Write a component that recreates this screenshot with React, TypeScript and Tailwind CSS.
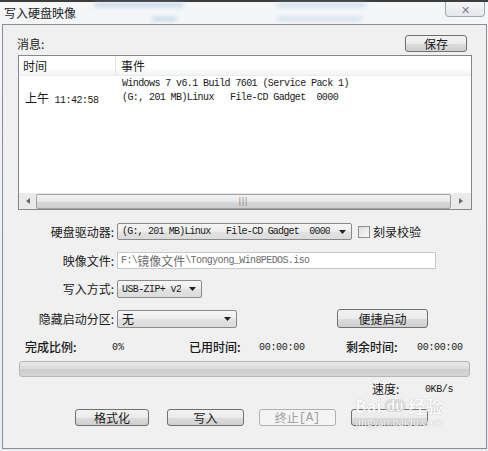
import type { ReactNode } from 'react';

const cjk = "font-['Noto_Sans_CJK_SC','Microsoft_YaHei',sans-serif]";
const mono = "font-['Liberation_Mono','Noto_Sans_CJK_SC',monospace]";

function Button({ children, className = '', disabled = false }: { children?: ReactNode; className?: string; disabled?: boolean }) {
  return (
    <div
      className={`flex h-[17px] items-center justify-center rounded-[3px] border text-[12px] leading-none ${
        disabled
          ? 'border-[#adb2b5] bg-[#f4f4f4] text-[#a0a0a0]'
          : 'border-[#707070] bg-[linear-gradient(#f2f2f2,#ebebeb_50%,#dddddd_51%,#cfcfcf)] text-[#1a1a1a]'
      } ${className}`}
    >
      {children}
    </div>
  );
}

function Arrow() {
  return (
    <svg width="7" height="4" viewBox="0 0 7 4" className="ml-[4px] shrink-0">
      <path d="M0 0h7L3.5 4z" fill="#222" />
    </svg>
  );
}

function Combo({ children, className = '' }: { children: ReactNode; className?: string }) {
  return (
    <div
      className={`flex items-center justify-between rounded-[2px] border border-[#8a8a8a] bg-[linear-gradient(#f6f6f6,#ececec_50%,#e2e2e2_51%,#dcdcdc)] pl-[4px] pr-[5px] ${className}`}
    >
      <span className="truncate">{children}</span>
      <Arrow />
    </div>
  );
}

export default function App() {
  return (
    <div className={`relative flex h-[451px] w-[488px] flex-col overflow-hidden bg-[#3d3d3d] ${cjk}`}>
      {/* frame */}
      <div className="mt-[2px] flex flex-1 flex-col bg-[linear-gradient(180deg,#f4f6f8,#e9edf1)] pb-[2px] pl-[2px] pr-[1px]">
        {/* title bar */}
        <div className="relative flex h-[22px] items-start">
          <div className="absolute left-[92px] top-[1px] h-[4px] w-[90px] rounded bg-[#9fc1e4] opacity-60 blur-[2px]" />
          <div className="absolute left-[150px] top-[15px] h-[4px] w-[25px] rounded bg-[#9fc1e4] opacity-60 blur-[2px]" />
          <div className="absolute left-[275px] top-[1px] h-[4px] w-[90px] rounded bg-[#a9c8e6] opacity-50 blur-[2px]" />
          <div className="absolute left-[275px] top-[15px] h-[4px] w-[85px] rounded bg-[#a9c8e6] opacity-50 blur-[2px]" />
          <span className="ml-[2px] mt-[3px] text-[12px] leading-[16px] text-[#1e1e1e]">写入硬盘映像</span>
          <div className="ml-auto mr-[2px] flex h-[15px] w-[40px] items-center justify-center rounded-b-[4px] border border-t-0 border-[#a2a7ad] bg-[linear-gradient(#f5f6f7,#e3e6ea)] text-[11px] leading-none text-[#7d7f83]">
            ✕
          </div>
        </div>

        {/* body */}
        <div className="relative flex flex-1 flex-col border border-[#8a8f95] bg-[#f0f0f0] pl-[15px] text-[12px] text-[#1a1a1a]">
          <div className="mt-[10px] flex h-[17px] items-center">
            <span className="ml-[-1px] leading-none">消息:</span>
            <Button className="ml-auto mr-[19px] w-[62px]">保存</Button>
          </div>

          {/* list */}
          <div className="mt-[3px] flex h-[155px] w-[454px] flex-col border border-[#828790] bg-white">
            <div className="flex h-[20px] items-center border-b border-[#ececec] bg-[linear-gradient(#ffffff,#ffffff_60%,#f3f4f6)]">
              <div className="flex h-full w-[97px] items-center border-r border-[#e0e2e6] pl-[4px]">时间</div>
              <div className="pl-[5px]">事件</div>
            </div>
            <div className="flex flex-1 items-start pt-[1px]">
              <div className={`mt-[14px] w-[98px] pl-[6px] text-[10px] leading-[14px] ${mono} tracking-[-0.5px]`}>
                <span className={`${cjk} tracking-normal text-[12px]`}>上午</span> 11:42:58
              </div>
              <div className={`pl-[5px] text-[10px] leading-[14px] tracking-[-0.6px] ${mono}`}>
                <div>Windows 7 v6.1 Build 7601 (Service Pack 1)</div>
                <div>(G:, 201 MB)Linux&nbsp;&nbsp;&nbsp;File-CD Gadget&nbsp;&nbsp;0000</div>
              </div>
            </div>
            {/* scrollbar */}
            <div className="flex h-[16px] items-center bg-[#eaeaea]">
              <div className="flex w-[17px] justify-center">
                <svg width="4" height="6" viewBox="0 0 4 6"><path d="M4 0v6L0 3z" fill="#6a6a6a" /></svg>
              </div>
              <div className="flex h-[15px] w-[415px] items-center justify-center rounded-[2px] border border-[#a2a2a2] bg-[linear-gradient(#f3f3f3,#e6e6e6_50%,#d6d6d6_51%,#cfcfcf)]">
                <span className="text-[8px] leading-none tracking-[1px] text-[#666]">|||</span>
              </div>
              <div className="flex flex-1 justify-center">
                <svg width="4" height="6" viewBox="0 0 4 6"><path d="M0 0v6l4-3z" fill="#6a6a6a" /></svg>
              </div>
            </div>
          </div>

          {/* drive */}
          <div className="mt-[13px] flex h-[17px] items-center">
            <span className="w-[96px] text-right">硬盘驱动器:</span>
            <Combo className={`ml-[3px] h-[17px] w-[235px] text-[10px] tracking-[-0.8px] ${mono}`}>
              (G:, 201 MB)Linux&nbsp;&nbsp;&nbsp;File-CD Gadget&nbsp;&nbsp;0000
            </Combo>
            <div className="ml-[6px] h-[12px] w-[12px] border border-[#8e8f8f] bg-[linear-gradient(135deg,#dcdcdc,#fbfbfb)]" />
            <span className="ml-[3px]">刻录校验</span>
          </div>

          {/* image file */}
          <div className="mt-[12px] flex h-[17px] items-center">
            <span className="w-[96px] text-right">映像文件:</span>
            <div className={`ml-[3px] flex h-[17px] w-[319px] items-center border border-[#c5c8cc] bg-white pl-[3px] text-[10px] tracking-[-0.6px] text-[#6d6d6d] ${mono}`}>
              F:\<span className={`${cjk} tracking-normal text-[12px]`}>镜像文件</span>\Tongyong_Win8PEDOS.iso
            </div>
          </div>

          {/* write mode */}
          <div className="mt-[11px] flex h-[18px] items-center">
            <span className="w-[96px] text-right">写入方式:</span>
            <Combo className={`ml-[3px] h-[18px] w-[85px] text-[10px] tracking-[-0.6px] ${mono}`}>USB-ZIP+ v2</Combo>
          </div>

          {/* hidden partition */}
          <div className="mt-[11px] flex h-[19px] items-center">
            <span className="w-[96px] text-right">隐藏启动分区:</span>
            <Combo className="ml-[3px] h-[18px] w-[120px]">无</Combo>
            <Button className="ml-[100px] h-[19px] w-[91px]">便捷启动</Button>
          </div>

          {/* status */}
          <div className="mt-[12px] flex h-[14px] items-center pl-[7px]">
            <span className="w-[87px] font-medium">完成比例:</span>
            <span className={`w-[77px] text-[10px] ${mono}`}>0%</span>
            <span className="w-[70px] font-medium">已用时间:</span>
            <span className={`w-[87px] text-[10px] tracking-[-0.3px] ${mono}`}>00:00:00</span>
            <span className="w-[71px] font-medium">剩余时间:</span>
            <span className={`text-[10px] tracking-[-0.3px] ${mono}`}>00:00:00</span>
          </div>

          {/* progress */}
          <div className="mt-[7px] ml-[1px] h-[16px] w-[451px] rounded-[3px] border border-[#b6b6b6] bg-[linear-gradient(#e9e9e9,#dadada_50%,#cdcdcd_51%,#d6d6d6)]" />

          {/* speed */}
          <div className="mt-[5px] flex h-[14px] items-center pl-[354px]">
            <span className="w-[53px]">速度:</span>
            <span className={`text-[10px] tracking-[-0.4px] ${mono}`}>0KB/s</span>
          </div>

          {/* buttons */}
          <div className="mt-[13px] flex h-[17px] items-center pl-[57px]">
            <Button className="w-[74px]">格式化</Button>
            <Button className="ml-[18px] w-[77px]">写入</Button>
            <Button className={`ml-[15px] w-[77px] text-[11px] ${mono}`} disabled>
              <span className={cjk}>终止</span>[A]
            </Button>
            <Button className="ml-[15px] w-[77px]" />
          </div>

          {/* watermark */}
          <div className="pointer-events-none absolute left-[352px] top-[372px] flex flex-col items-center text-white opacity-80 [text-shadow:0_0_1px_#8a8a8a]">
            <div className="flex items-center gap-[2px] text-[17px] font-bold leading-none">
              <span>Bai</span>
              <span className="rounded-full bg-[#d9d9d9] px-[3px] text-[13px]">du</span>
              <span>经验</span>
            </div>
            <span className="mt-[3px] text-[10px] leading-none">jingyan.baidu.com</span>
          </div>
        </div>
      </div>
    </div>
  );
}
